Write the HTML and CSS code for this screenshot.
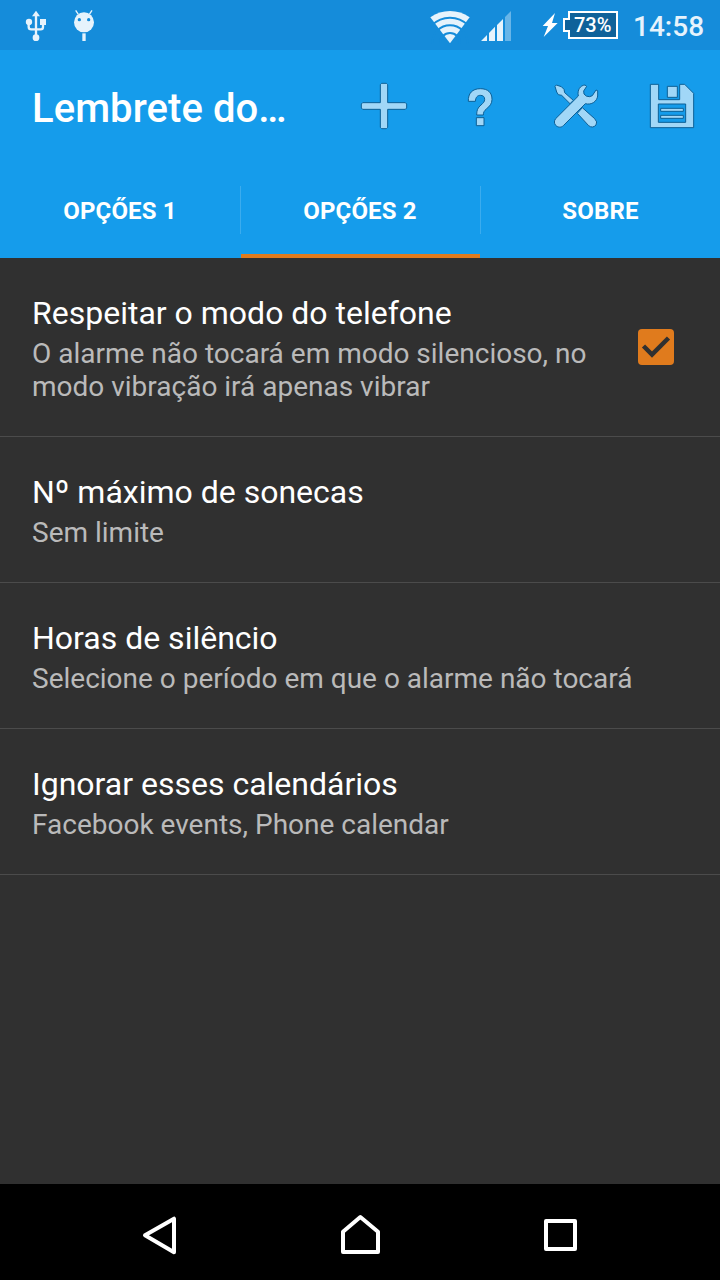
FILE: index.html
```html
<!DOCTYPE html>
<html lang="pt">
<head>
<meta charset="utf-8">
<title>Lembrete do calendário</title>
<link rel="stylesheet" href="styles.css">
</head>
<body>
<div class="screen">
  <header class="status">
    <div class="status-left">
      <svg class="usb" viewBox="72 27 72 102">
        <path class="usb-line" d="M108 40V112M86 68V80Q86 88 94 88H122Q129 88 129 80V70"/>
        <path d="M108 32L120 49H96Z"/><circle cx="87" cy="66" r="9.500"/><rect x="120" y="57" width="18" height="18"/><circle cx="108" cy="113" r="10"/>
      </svg>
      <svg class="droid" viewBox="216 27 72 102">
        <circle cx="252" cy="67" r="30"/><path class="antenna" d="M235 43L227 31M268 43L276 31"/><rect x="247" y="100" width="10" height="23"/>
        <circle class="eye" cx="238" cy="59" r="5"/><circle class="eye" cx="266" cy="59" r="5"/>
      </svg>
    </div>
    <svg class="wifi" viewBox="30 27 120 105">
      <path d="M31 52Q58 33 90 33Q122 33 149 52L90 130Z"/>
      <g class="gap"><circle cx="90" cy="129" r="76"/><circle cx="90" cy="129" r="53"/><circle cx="90" cy="129" r="30"/></g>
    </svg>
    <svg class="signal" viewBox="183 30 93 96">
      <path d="M183 123L201 105V123ZM207 99L225 80V123H207ZM231 75L249 57V123H231Z"/><path class="weak" d="M255 51L273 33V123H255Z"/>
    </svg>
    <svg class="bolt" viewBox="36 36 51 78"><path d="M75 39L38 78H54L41 111L83 69H66Z"/></svg>
    <div class="battery"><svg class="shell" viewBox="99 33 165 84"><path d="M117 36H261V114H117V93H102V57H117Z"/></svg><span class="level">73%</span></div>
    <time class="clock">14:58</time>
  </header>
  <div class="appbar">
    <h1 class="title">Lembrete do…</h1>
    <button class="action" aria-label="Adicionar"><svg viewBox="30 36 144 144"><path d="M95 40H109L113 44V98H166L170 102V114L166 118H113V172L109 176H95L91 172V118H38L34 114V102L38 98H91V44Z"/></svg></button>
    <button class="action" aria-label="Ajuda"><svg viewBox="318 36 144 144"><path d="M355 94C354 70 367 56 391 56C414 56 426 68 426 88C426 101 419 109 410 116C402 123 400 127 400 135H380C380 121 383 113 393 105C400 99 404 95 404 88C404 80 399 76 391 76C382 76 377 82 376 94Z"/><path d="M379 143H402V167H379Z"/></svg></button>
    <button class="action" aria-label="Ferramentas"><svg viewBox="36 36 144 144">
      <path d="M45 49L49 45L64 50L72 58L74 68L100 91L90 101L65 76L55 74L50 66Z"/>
      <path d="M127 113L164 146Q174 156 168 165Q158 176 146 167L112 130Z"/>
      <path d="M135 45C121 46 111 60 115 78L47 146C42 152 42 160 47 166C54 173 64 173 70 167L136 101C155 106 171 94 173 78V62L168 60L157 77L149 80Q138 81 132 72L131 63L140 49Z"/>
    </svg></button>
    <button class="action" aria-label="Salvar"><svg viewBox="324 36 144 144">
      <path d="M331 43H356V89H419V43H434L461 70V173H331Z"/><path d="M382 49H412V82H382Z"/><path class="label" d="M355 102H437V157H355Z"/><path d="M362 115H430V124H362ZM362 136H430V145H362Z"/>
    </svg></button>
  </div>
  <nav class="tabs">
    <a class="tab">OPÇŐES 1</a><a class="tab tab-active">OPÇŐES 2</a><a class="tab">SOBRE</a>
  </nav>
  <main class="list">
    <section class="item">
      <div class="copy"><h2 class="name">Respeitar o modo do telefone</h2><p class="summary">O alarme não tocará em modo silencioso, no modo vibração irá apenas vibrar</p></div>
      <svg class="check" viewBox="0 0 36 36"><rect width="36" height="36" rx="4"/><path d="M5.500 17L14 25.500L30.500 9"/></svg>
    </section>
    <section class="item"><div class="copy"><h2 class="name">Nº máximo de sonecas</h2><p class="summary">Sem limite</p></div></section>
    <section class="item"><div class="copy"><h2 class="name">Horas de silêncio</h2><p class="summary">Selecione o período em que o alarme não tocará</p></div></section>
    <section class="item"><div class="copy"><h2 class="name">Ignorar esses calendários</h2><p class="summary">Facebook events, Phone calendar</p></div></section>
  </main>
  <footer class="navbar">
    <svg viewBox="60 123 120 144"><path d="M75 196L162 146V247Z"/></svg>
    <svg viewBox="660 123 120 144"><path d="M669 246V185L721 141L774 185V246Z"/></svg>
    <svg viewBox="1260 123 120 144"><path d="M1278 153H1365V237H1278Z"/></svg>
  </footer>
</div>
</body>
</html>
```
FILE: styles.css
```css
* { box-sizing: border-box; }
body, h1, h2, p { margin: 0; }
body { font-family: Roboto, sans-serif; background: #303030; color: #fff; }
svg { display: block; flex: none; }
.screen { width: 720px; height: 1280px; display: flex; flex-direction: column; overflow: hidden; }

.status { height: 50px; flex: none; background: #158cda; display: flex; align-items: flex-start; fill: #e6f3fc; }
.status-left { display: flex; gap: 24px; padding: 9px 0 0 24px; margin-right: 334px; }
.usb, .droid { width: 24px; height: 34px; }
.usb-line { fill: none; stroke: #e6f3fc; stroke-width: 7; }
.antenna { stroke: #e6f3fc; stroke-width: 4; }
.eye { fill: #158cda; }
.wifi { width: 40px; height: 35px; margin-top: 9px; }
.gap { fill: none; stroke: #158cda; stroke-width: 6; }
.signal { width: 31px; height: 32px; margin: 10px 0 0 11px; }
.weak { opacity: .4; }
.bolt { width: 17px; height: 26px; margin: 12px 0 0 30px; fill: #fff; }
.battery { display: grid; width: 55px; height: 28px; margin: 11px 0 0 4px; }
.battery > * { grid-area: 1 / 1; }
.shell { width: 55px; height: 28px; fill: #0f629a; stroke: #fff; stroke-width: 6; }
.level { padding-left: 11px; font-size: 20px; line-height: 28px; font-weight: 500; }
.clock { margin: 10px 0 0 15px; font-size: 28px; line-height: 34px; font-weight: 500; color: #e6f3fc; }

.appbar { height: 112px; flex: none; background: #159ceb; display: flex; align-items: center; padding-left: 32px; }
.title { width: 304px; font-size: 40px; line-height: 48px; font-weight: 500; padding-top: 6px; letter-spacing: .08px; }
.action { width: 96px; height: 112px; padding: 0; border: 0; background: none; display: grid; place-items: center; }
.action svg { width: 48px; height: 48px; fill: #a1d7f7; stroke: #0c5f96; stroke-width: 3; stroke-linejoin: round; }
.action .label { fill: #159ceb; }

.tabs { height: 96px; flex: none; display: grid; grid-template-columns: repeat(3, 240px); background: #159ceb; }
.tab { display: grid; place-items: center; font-size: 24px; line-height: 28px; font-weight: 700; letter-spacing: .15px; padding-top: 2px; background: linear-gradient(#3bacee, #3bacee) 0 24px / 1px 48px no-repeat; }
.tab:first-child { background: none; }
.tab:last-child { padding-left: 1px; }
.tab-active { background: linear-gradient(#3bacee, #3bacee) 0 24px / 1px 48px no-repeat, linear-gradient(#e07b1d, #e07b1d) 1px 92px / 239px 4px no-repeat; }

.list { flex: 1; }
.item { display: flex; align-items: center; justify-content: space-between; padding: 36px 46px 33px 32px; border-bottom: 1px solid #4b4b4b; }
.copy { max-width: 606px; }
.name { font-size: 32px; line-height: 38px; font-weight: 400; }
.summary { margin-top: 5px; font-size: 28px; line-height: 33px; color: #bababa; }
.check { width: 36px; height: 36px; margin-bottom: 3px; fill: #e07b1d; }
.check path { fill: none; stroke: #303030; stroke-width: 4.500; }

.navbar { height: 96px; flex: none; background: #000; display: flex; justify-content: space-between; padding: 27px 140px 0; }
.navbar svg { width: 40px; height: 48px; fill: none; stroke: #fff; stroke-width: 12; stroke-linejoin: round; }
```
